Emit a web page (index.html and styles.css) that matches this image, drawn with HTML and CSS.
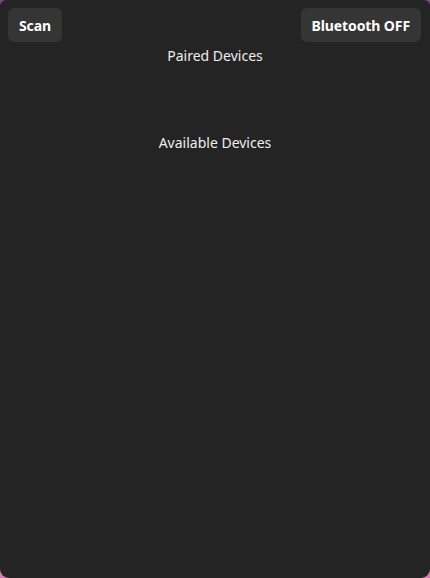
FILE: index.html
```html
<!DOCTYPE html>
<html>
<head>
<meta charset="utf-8">
<link rel="stylesheet" href="styles.css">
</head>
<body>
<div class="window">
  <div class="header">
    <button class="btn">Scan</button>
    <button class="btn">Bluetooth OFF</button>
  </div>
  <div class="section-title paired">Paired Devices</div>
  <div class="list"></div>
  <div class="section-title">Available Devices</div>
  <div class="list"></div>
</div>
</body>
</html>
```
FILE: styles.css
```css
html, body {
  margin: 0;
  padding: 0;
  width: 430px;
  height: 578px;
  overflow: hidden;
}
body {
  background: linear-gradient(to bottom, #7a4a8a 0%, #4a3040 10%, #8a5070 60%, #d080b0 100%);
}
.window {
  width: 430px;
  height: 578px;
  box-sizing: border-box;
  background: #242424;
  border-radius: 6px 6px 9px 9px;
  display: flex;
  flex-direction: column;
  font-family: "Noto Sans", "Open Sans", sans-serif;
  color: #ffffff;
}
.header {
  display: flex;
  justify-content: space-between;
  padding: 8px 9px 0 8px;
}
.btn {
  height: 34px;
  padding: 0 11px;
  border: none;
  border-radius: 6px;
  background: #353535;
  color: #ffffff;
  font-family: "Noto Sans", "Open Sans", sans-serif;
  font-weight: 700;
  font-size: 14px;
  letter-spacing: -0.1px;
}
.section-title {
  text-align: center;
  font-size: 14px;
  color: #eeeeee;
  line-height: 20px;
}
.paired {
  margin-top: 4px;
}
.list {
  height: 67px;
}
```
